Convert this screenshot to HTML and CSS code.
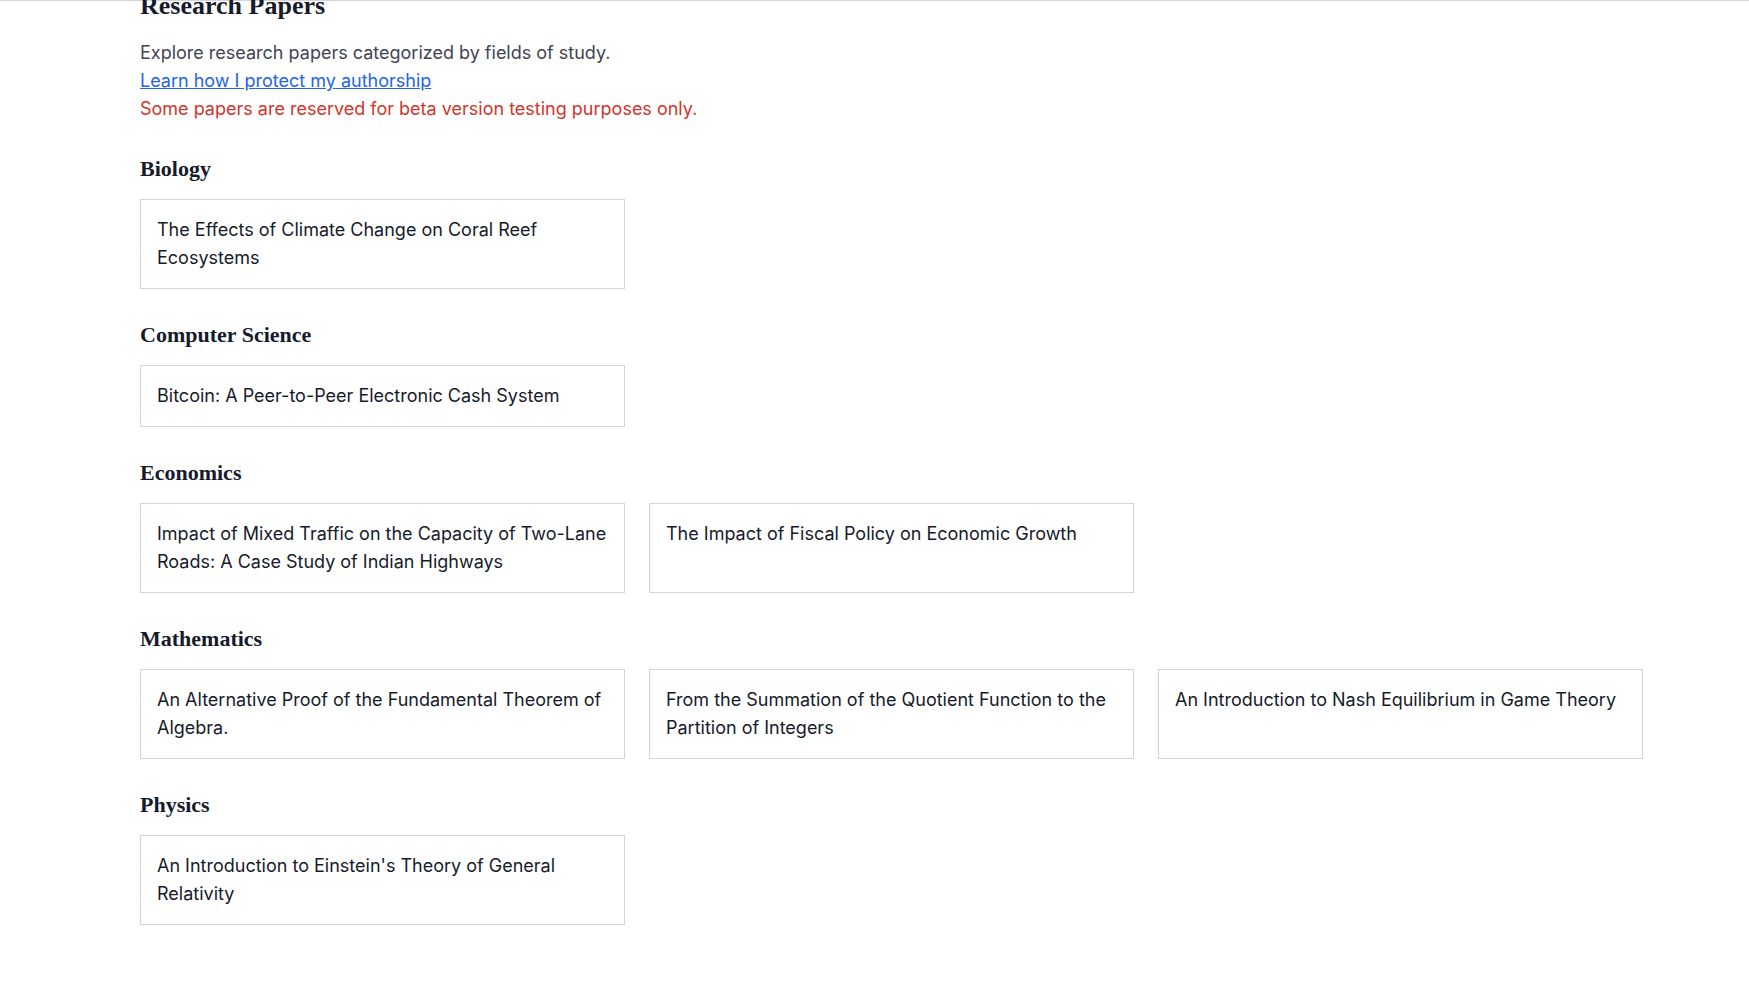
FILE: index.html
```html
<!DOCTYPE html>
<html lang="en">
<head>
<meta charset="utf-8">
<title>Research Papers</title>
<link rel="stylesheet" href="styles.css">
</head>
<body>
<div class="page">
  <main class="content">
    <h1 class="title">Research Papers</h1>
    <div class="intro">
      <p class="desc">Explore research papers categorized by fields of study.</p>
      <p><a class="link" href="#">Learn how I protect my authorship</a></p>
      <p class="warn">Some papers are reserved for beta version testing purposes only.</p>
    </div>

    <section class="field">
      <h2 class="field-title">Biology</h2>
      <div class="grid">
        <div class="card">The Effects of Climate Change on Coral Reef Ecosystems</div>
      </div>
    </section>

    <section class="field">
      <h2 class="field-title">Computer Science</h2>
      <div class="grid">
        <div class="card">Bitcoin: A Peer-to-Peer Electronic Cash System</div>
      </div>
    </section>

    <section class="field">
      <h2 class="field-title">Economics</h2>
      <div class="grid">
        <div class="card">Impact of Mixed Traffic on the Capacity of Two-Lane Roads: A Case Study of Indian Highways</div>
        <div class="card">The Impact of Fiscal Policy on Economic Growth</div>
      </div>
    </section>

    <section class="field">
      <h2 class="field-title">Mathematics</h2>
      <div class="grid">
        <div class="card">An Alternative Proof of the Fundamental Theorem of Algebra.</div>
        <div class="card">From the Summation of the Quotient Function to the Partition of Integers</div>
        <div class="card">An Introduction to Nash Equilibrium in Game Theory</div>
      </div>
    </section>

    <section class="field">
      <h2 class="field-title">Physics</h2>
      <div class="grid">
        <div class="card">An Introduction to Einstein's Theory of General Relativity</div>
      </div>
    </section>
  </main>
</div>
</body>
</html>
```

FILE: styles.css
```css
html, body {
  margin: 0;
  padding: 0;
  background: #ffffff;
}

body {
  font-family: Inter, "Noto Sans", "Liberation Sans", sans-serif;
  color: #111827;
  overflow: hidden;
  height: 992px;
}

.page {
  border-top: 1px solid #d4d4d8;
}

.content {
  width: 1503px;
  margin: -13px 0 0 140px;
}

.title {
  margin: 0 0 15px;
  font-family: "Liberation Serif", serif;
  font-weight: 700;
  font-size: 26px;
  line-height: 36px;
  color: #161b2b;
}

.intro {
  margin-bottom: 32px;
}

.intro p {
  margin: 0;
  font-size: 18px;
  line-height: 28px;
}

.desc {
  color: #3f4451;
}

.link {
  color: #2563eb;
  text-decoration: underline;
}

.warn {
  color: #d5332b;
}

.field {
  margin-bottom: 32px;
}

.field-title {
  margin: 0 0 16px;
  font-family: "Liberation Serif", serif;
  font-weight: 700;
  font-size: 22px;
  line-height: 28px;
  color: #161b2b;
}

.grid {
  display: grid;
  grid-template-columns: repeat(3, 1fr);
  gap: 24px;
}

.card {
  border: 1px solid #d4d4d8;
  padding: 16px;
  font-size: 18px;
  line-height: 28px;
  color: #161b2b;
}
```
